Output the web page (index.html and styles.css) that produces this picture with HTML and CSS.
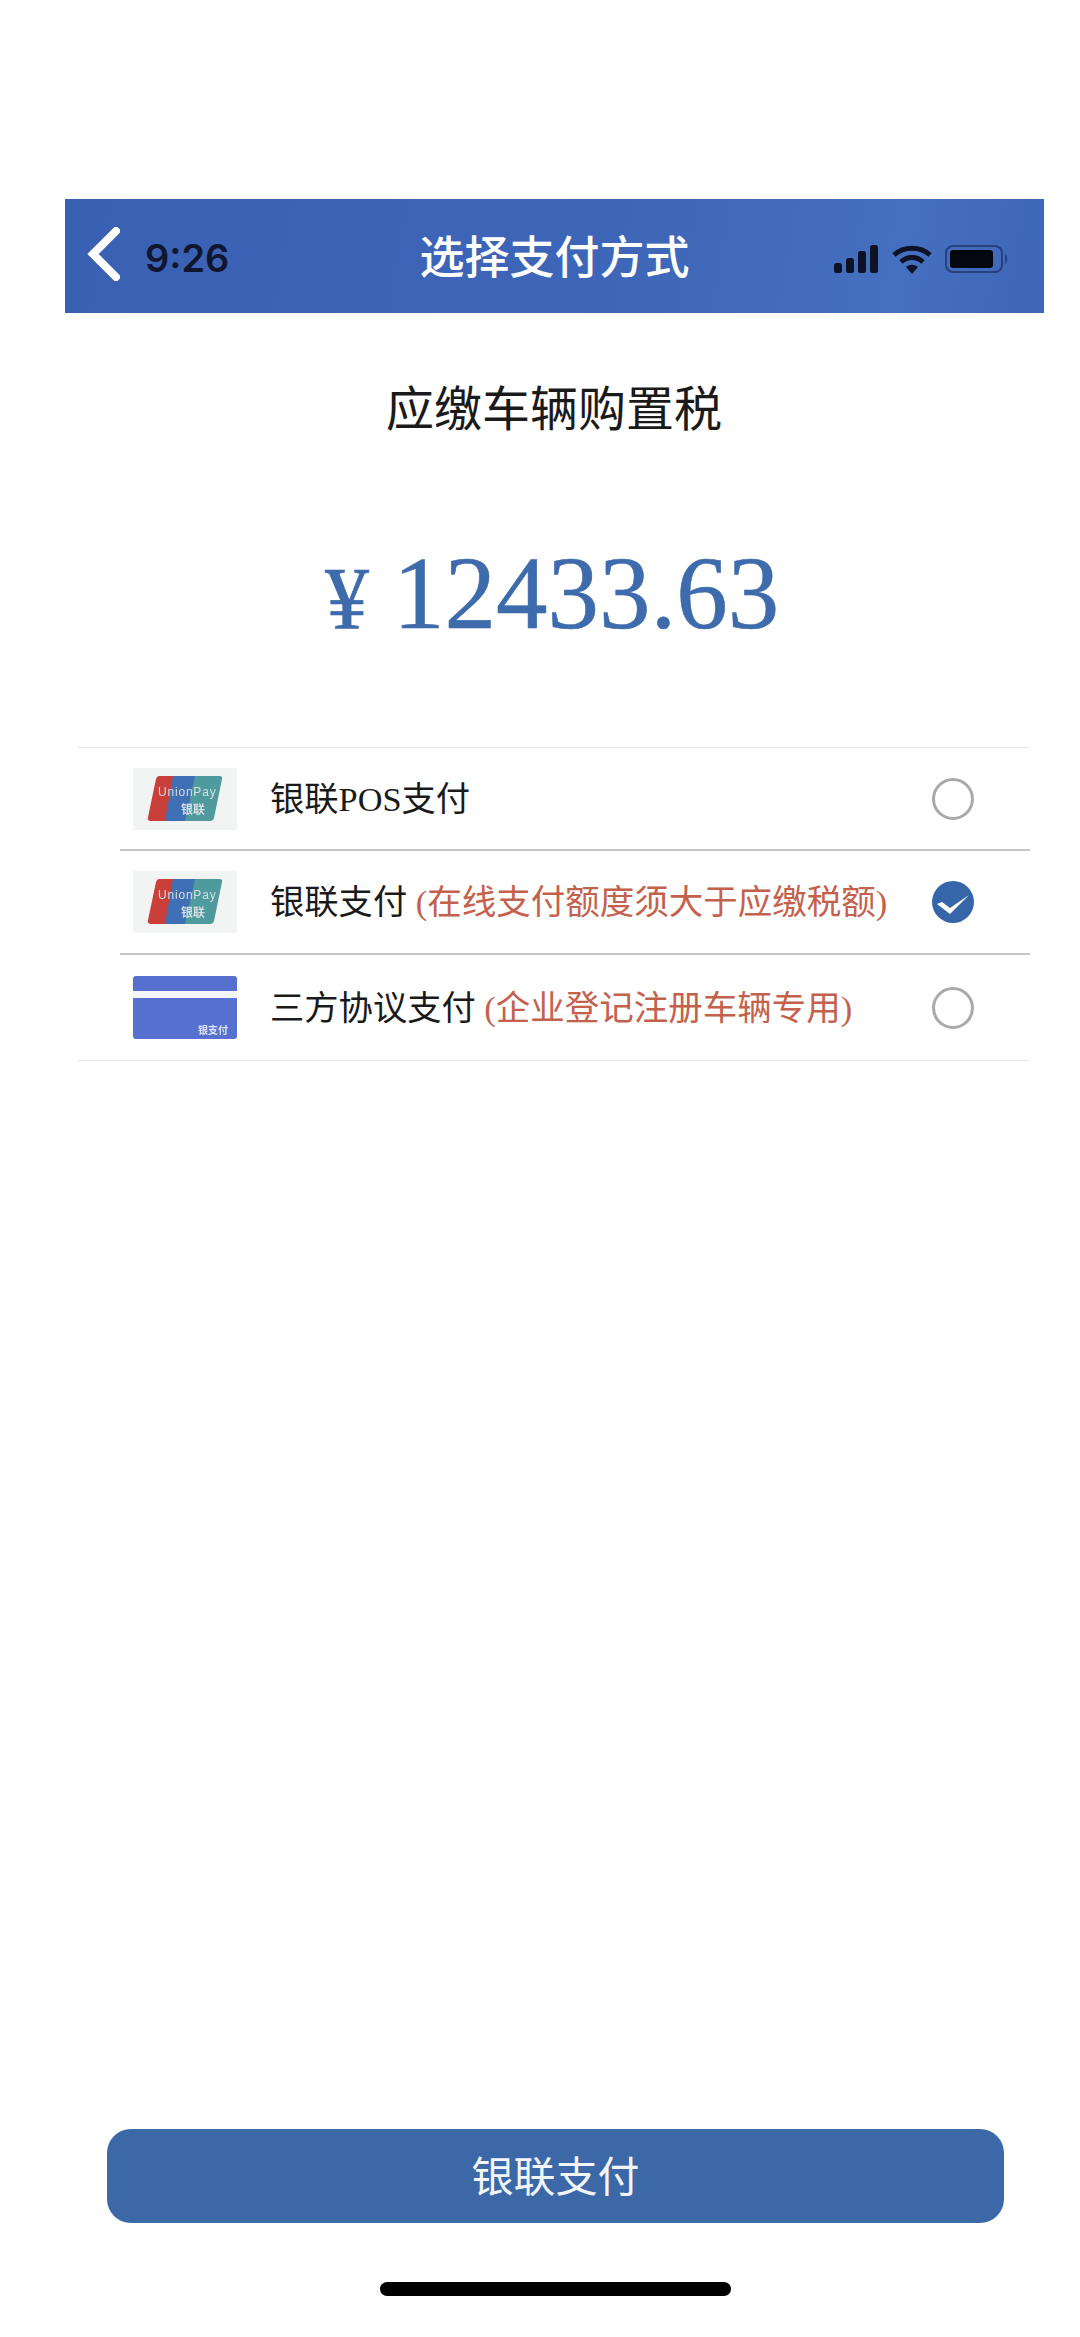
FILE: index.html
```html
<!doctype html>
<html>
    <head>
        <meta charset="utf-8">
        <title>选择支付方式</title>
        <link rel="stylesheet" href="styles.css">
    </head>
    <body>
        <div class="page">
            <header class="topbar">
                <div class="topbar-left">
                    <svg class="back" width="33" height="54" viewBox="0 0 33 54">
                        <path d="M29 4 L6 27 L29 50" fill="none" stroke="#fff" stroke-width="8" stroke-linecap="round" stroke-linejoin="miter"/>
                    </svg>
                    <span class="time">9:26</span>
                </div>
                <h1 class="title">选择支付方式</h1>
                <div class="status">
                    <svg width="45" height="28" viewBox="0 0 45 28" fill="#0d1226">
                        <rect x="0" y="18" width="8" height="10" rx="2.5"/>
                        <rect x="12" y="13" width="8" height="15" rx="2.5"/>
                        <rect x="24" y="6" width="8" height="22" rx="2.5"/>
                        <rect x="36" y="0" width="8" height="28" rx="2.5"/>
                    </svg>
                    <svg width="40" height="29" viewBox="0 0 40 29">
                        <path d="M2 10 C12 1 28 1 38 10 M9 17 C15 11 25 11 31 17" fill="none" stroke="#0d1226" stroke-width="5"/>
                        <path d="M14 22 C18 19 22 19 26 22 L20 29 Z" fill="#0d1226"/>
                    </svg>
                    <svg width="64" height="28" viewBox="0 0 64 28">
                        <rect x="1" y="1" width="56" height="26" rx="7" fill="none" stroke="#27407e" stroke-width="2"/>
                        <rect x="5" y="5" width="43" height="18" rx="3" fill="#05070f"/>
                        <path d="M60 9 C63 11 63 17 60 19 Z" fill="#27407e"/>
                    </svg>
                </div>
            </header>

            <main class="main">
                <h2 class="due">应缴车辆购置税</h2>
                <div class="amount"><span class="yen">¥</span><span class="sum">12433.63</span></div>

                <div class="pay-list">
                    <div class="pay-row row-a">
                        <svg class="pay-icon" width="104" height="62" viewBox="0 0 104 62">
                            <rect width="104" height="62" fill="#f1f4f3"/>
                            <path d="M26 8 H44 L36 53 H18 Q14 53 15 49 L23 11 Q24 8 26 8 Z" fill="#c9403a"/>
                            <path d="M40 8 H64 L54 53 H32 Z" fill="#3f6fb5"/>
                            <path d="M62 8 H86 Q90 8 89 11 L81 50 Q80 53 77 53 H52 Z" fill="#4f9a9c"/>
                            <text class="up-latin" x="25" y="28">UnionPay</text>
                            <text class="up-cn" x="48" y="46">银联</text>
                        </svg>
                        <div class="pay-name">银联POS支付</div>
                        <span class="radio"></span>
                    </div>
                    <hr class="sep">
                    <div class="pay-row row-b">
                        <svg class="pay-icon" width="104" height="62" viewBox="0 0 104 62">
                            <rect width="104" height="62" fill="#f1f4f3"/>
                            <path d="M26 8 H44 L36 53 H18 Q14 53 15 49 L23 11 Q24 8 26 8 Z" fill="#c9403a"/>
                            <path d="M40 8 H64 L54 53 H32 Z" fill="#3f6fb5"/>
                            <path d="M62 8 H86 Q90 8 89 11 L81 50 Q80 53 77 53 H52 Z" fill="#4f9a9c"/>
                            <text class="up-latin" x="25" y="28">UnionPay</text>
                            <text class="up-cn" x="48" y="46">银联</text>
                        </svg>
                        <div class="pay-name">银联支付 <span class="note">(在线支付额度须大于应缴税额)</span></div>
                        <svg class="check" width="42" height="42" viewBox="0 0 42 42">
                            <circle cx="21" cy="21" r="21" fill="#3765aa"/>
                            <path d="M5 23 L18 33 L37 14 L18 27 L10 21 Z" fill="#fff"/>
                        </svg>
                    </div>
                    <hr class="sep">
                    <div class="pay-row row-c">
                        <svg class="pay-icon" width="104" height="63" viewBox="0 0 104 63">
                            <rect width="104" height="63" rx="3" fill="#5670d0"/>
                            <rect y="15" width="104" height="7" fill="#f4f5fb"/>
                            <text class="card-cn" x="65" y="58">银支付</text>
                        </svg>
                        <div class="pay-name">三方协议支付 <span class="note">(企业登记注册车辆专用)</span></div>
                        <span class="radio"></span>
                    </div>
                </div>
            </main>

            <button class="pay-btn">银联支付</button>
            <div class="home-bar"></div>
        </div>
    </body>
</html>
```

FILE: styles.css
```css
* {
    margin: 0;
    padding: 0;
    box-sizing: border-box;
}
body {
    background: #fff;
    font-family: "Liberation Serif", "Noto Sans CJK SC", serif;
    color: #1a1a1a;
}
.page {
    height: 2337px;
    display: flex;
    flex-direction: column;
    padding-top: 199px;
    overflow: hidden;
}

/* top bar */
.topbar {
    width: 979px;
    height: 114px;
    margin-left: 65px;
    display: grid;
    grid-template-columns: 1fr auto 1fr;
    align-items: center;
    background: linear-gradient(100deg, #3a60b4 0%, #3e66b8 55%, #456fbf 85%, #3f66b8 100%);
}
.topbar-left {
    display: flex;
    align-items: center;
    padding-left: 22px;
    gap: 25px;
}
.back {
    margin-top: -5px;
}
.time {
    font-family: Inter, sans-serif;
    font-size: 38px;
    font-weight: 600;
    line-height: 1;
    color: #10162e;
    margin-top: 4px;
}
.title {
    font-family: "Noto Sans CJK SC", sans-serif;
    font-size: 45px;
    font-weight: 500;
    line-height: 1;
    color: #fff;
    margin-top: -3px;
}
.status {
    display: flex;
    justify-content: flex-end;
    align-items: center;
    gap: 13px;
    padding-right: 35px;
    margin-top: 6px;
}

/* amount */
.main {
    flex: 1;
}
.due {
    font-family: "Noto Sans CJK SC", sans-serif;
    font-size: 48px;
    font-weight: 400;
    line-height: 60px;
    text-align: center;
    margin-top: 62px;
    padding-left: 28px;
}
.amount {
    display: flex;
    justify-content: center;
    align-items: baseline;
    gap: 24px;
    margin-top: 98px;
    padding-left: 24px;
    line-height: 120px;
    color: #3d6bab;
    -webkit-text-stroke: 0.6px #3d6bab;
}
.yen {
    font-size: 88px;
}
.sum {
    font-size: 103px;
}

/* pay methods */
.pay-list {
    width: 952px;
    margin-left: 78px;
    margin-top: 88px;
    border-top: 1px solid #e6e6e6;
    border-bottom: 1px solid #e6e6e6;
}
.pay-row {
    display: flex;
    align-items: center;
    padding-left: 55px;
    padding-right: 56px;
}
.row-a {
    height: 101px;
}
.row-b {
    height: 102px;
}
.row-c {
    height: 105px;
}
.sep {
    border: 0;
    height: 2px;
    margin-left: 42px;
    background: #c6c6c6;
}
.pay-icon {
    flex: none;
    filter: blur(0.7px);
}
.up-latin {
    font-family: "Liberation Sans", sans-serif;
    font-size: 12px;
    letter-spacing: 0.8px;
    fill: #d9dde0;
}
.up-cn {
    font-family: "Noto Sans CJK SC", sans-serif;
    font-size: 12px;
    font-weight: 700;
    fill: #d5dde6;
}
.card-cn {
    font-family: "Noto Sans CJK SC", sans-serif;
    font-size: 10px;
    font-weight: 700;
    fill: #dfe4f6;
}
.pay-name {
    flex: 1;
    margin-left: 33px;
    font-size: 34.3px;
    line-height: 44px;
    white-space: nowrap;
}
.note {
    color: #c4614c;
    font-size: 34.5px;
}
.radio {
    flex: none;
    width: 42px;
    height: 42px;
    border: 3px solid #a9a9a9;
    border-radius: 50%;
}
.check {
    flex: none;
}

/* bottom */
.pay-btn {
    display: block;
    flex: none;
    width: 897px;
    height: 94px;
    margin-left: 107px;
    padding-bottom: 6px;
    border: 0;
    border-radius: 24px;
    background: #3d68a8;
    color: #f2f5fa;
    font-family: "Noto Sans CJK SC", sans-serif;
    font-size: 42px;
    font-weight: 400;
}
.home-bar {
    flex: none;
    width: 351px;
    height: 14px;
    margin: 59px 0 41px 380px;
    border-radius: 7px;
    background: #000;
}
```
